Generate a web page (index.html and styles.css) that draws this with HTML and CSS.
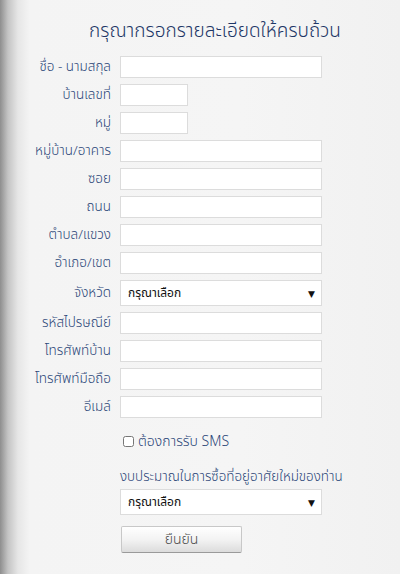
FILE: index.html
```html
<!DOCTYPE html>
<html lang="th">
<head>
    <meta charset="UTF-8">
    <meta name="viewport" content="width=device-width, initial-scale=1.0">
    <title>กรอกรายละเอียด</title>
    <link rel="stylesheet" href="styles.css">
</head>
<body>
    <h1 class="title">กรุณากรอกรายละเอียดให้ครบถ้วน</h1>

    <form class="register">
        <div class="fields">
            <label for="fullname">ชื่อ - นามสกุล</label>
            <input class="field" type="text" id="fullname">

            <label for="houseNo">บ้านเลขที่</label>
            <input class="field short" type="text" id="houseNo">

            <label for="moo">หมู่</label>
            <input class="field short" type="text" id="moo">

            <label for="village">หมู่บ้าน/อาคาร</label>
            <input class="field" type="text" id="village">

            <label for="soi">ซอย</label>
            <input class="field" type="text" id="soi">

            <label for="road">ถนน</label>
            <input class="field" type="text" id="road">

            <label for="subdistrict">ตำบล/แขวง</label>
            <input class="field" type="text" id="subdistrict">

            <label for="district">อำเภอ/เขต</label>
            <input class="field" type="text" id="district">

            <label for="province">จังหวัด</label>
            <span class="select-wrap">
                <select class="picker" id="province">
                    <option>กรุณาเลือก</option>
                </select>
            </span>

            <label for="zipcode">รหัสไปรษณีย์</label>
            <input class="field" type="text" id="zipcode">

            <label for="phone">โทรศัพท์บ้าน</label>
            <input class="field" type="text" id="phone">

            <label for="mobile">โทรศัพท์มือถือ</label>
            <input class="field" type="text" id="mobile">

            <label for="email">อีเมล์</label>
            <input class="field" type="text" id="email">
        </div>

        <div class="extra">
            <label class="sms">
                <input type="checkbox" class="check">
                <span>ต้องการรับ SMS</span>
            </label>

            <p class="budget-label">งบประมาณในการซื้อที่อยู่อาศัยใหม่ของท่าน</p>
            <span class="select-wrap">
                <select class="picker" id="budget">
                    <option>กรุณาเลือก</option>
                </select>
            </span>

            <button type="submit" class="submit">ยืนยัน</button>
        </div>
    </form>
</body>
</html>
```

FILE: styles.css
```css
body {
    margin: 0;
    min-height: 574px;
    font-family: "Noto Sans Thai", "Noto Sans", "DejaVu Sans", sans-serif;
    background: linear-gradient(to right, #8e8e8e 0, #c4c4c4 8px, #e6e6e6 18px, #f4f4f4 30px, #f5f5f5 60%, #f1f1f1 100%);
}

.title {
    margin: 0;
    padding: 18px 0 0 30px;
    height: 28px;
    line-height: 28px;
    font-size: 19px;
    font-weight: 300;
    color: #1e3767;
    text-align: center;
}

.register {
    margin-top: 10px;
}

.fields {
    display: grid;
    grid-template-columns: 111px auto;
    column-gap: 9px;
    row-gap: 6px;
    align-items: center;
}

.fields label {
    text-align: right;
    font-size: 13.5px;
    font-weight: 300;
    color: #2b4678;
    white-space: nowrap;
}

.field {
    box-sizing: border-box;
    width: 202px;
    height: 22px;
    margin: 0;
    border: 1px solid #dcdcdc;
    background: #fff;
}

.short {
    width: 68px;
}

.select-wrap {
    position: relative;
    display: block;
    width: 202px;
}

.select-wrap::after {
    content: "▼";
    position: absolute;
    right: 7px;
    top: 7px;
    font-size: 9px;
    color: #111;
    pointer-events: none;
}

.picker {
    box-sizing: border-box;
    width: 202px;
    height: 26px;
    margin: 0;
    padding: 0 7px;
    border: 1px solid #dcdcdc;
    border-radius: 0;
    background: #fff;
    -webkit-appearance: none;
    appearance: none;
    font-family: inherit;
    font-size: 12px;
    color: #111;
}

.extra {
    margin-left: 120px;
    padding-top: 13px;
}

.sms {
    display: flex;
    align-items: center;
    gap: 4px;
    margin-left: 3px;
    font-size: 14px;
    font-weight: 300;
    color: #2b4678;
}

.check {
    width: 11px;
    height: 11px;
    margin: 0;
}

.budget-label {
    margin: 15px 0 2px;
    font-size: 13.4px;
    font-weight: 300;
    color: #2b4678;
    white-space: nowrap;
}

.submit {
    display: block;
    margin: 11px 0 0 1px;
    width: 121px;
    height: 27px;
    border: 1px solid #c8c8c8;
    border-bottom-color: #9a9a9a;
    border-radius: 2px;
    background: linear-gradient(#ffffff, #f3f3f3 50%, #dcdcdc);
    font-family: inherit;
    font-size: 14px;
    font-weight: 300;
    color: #4a4a4a;
}
```
